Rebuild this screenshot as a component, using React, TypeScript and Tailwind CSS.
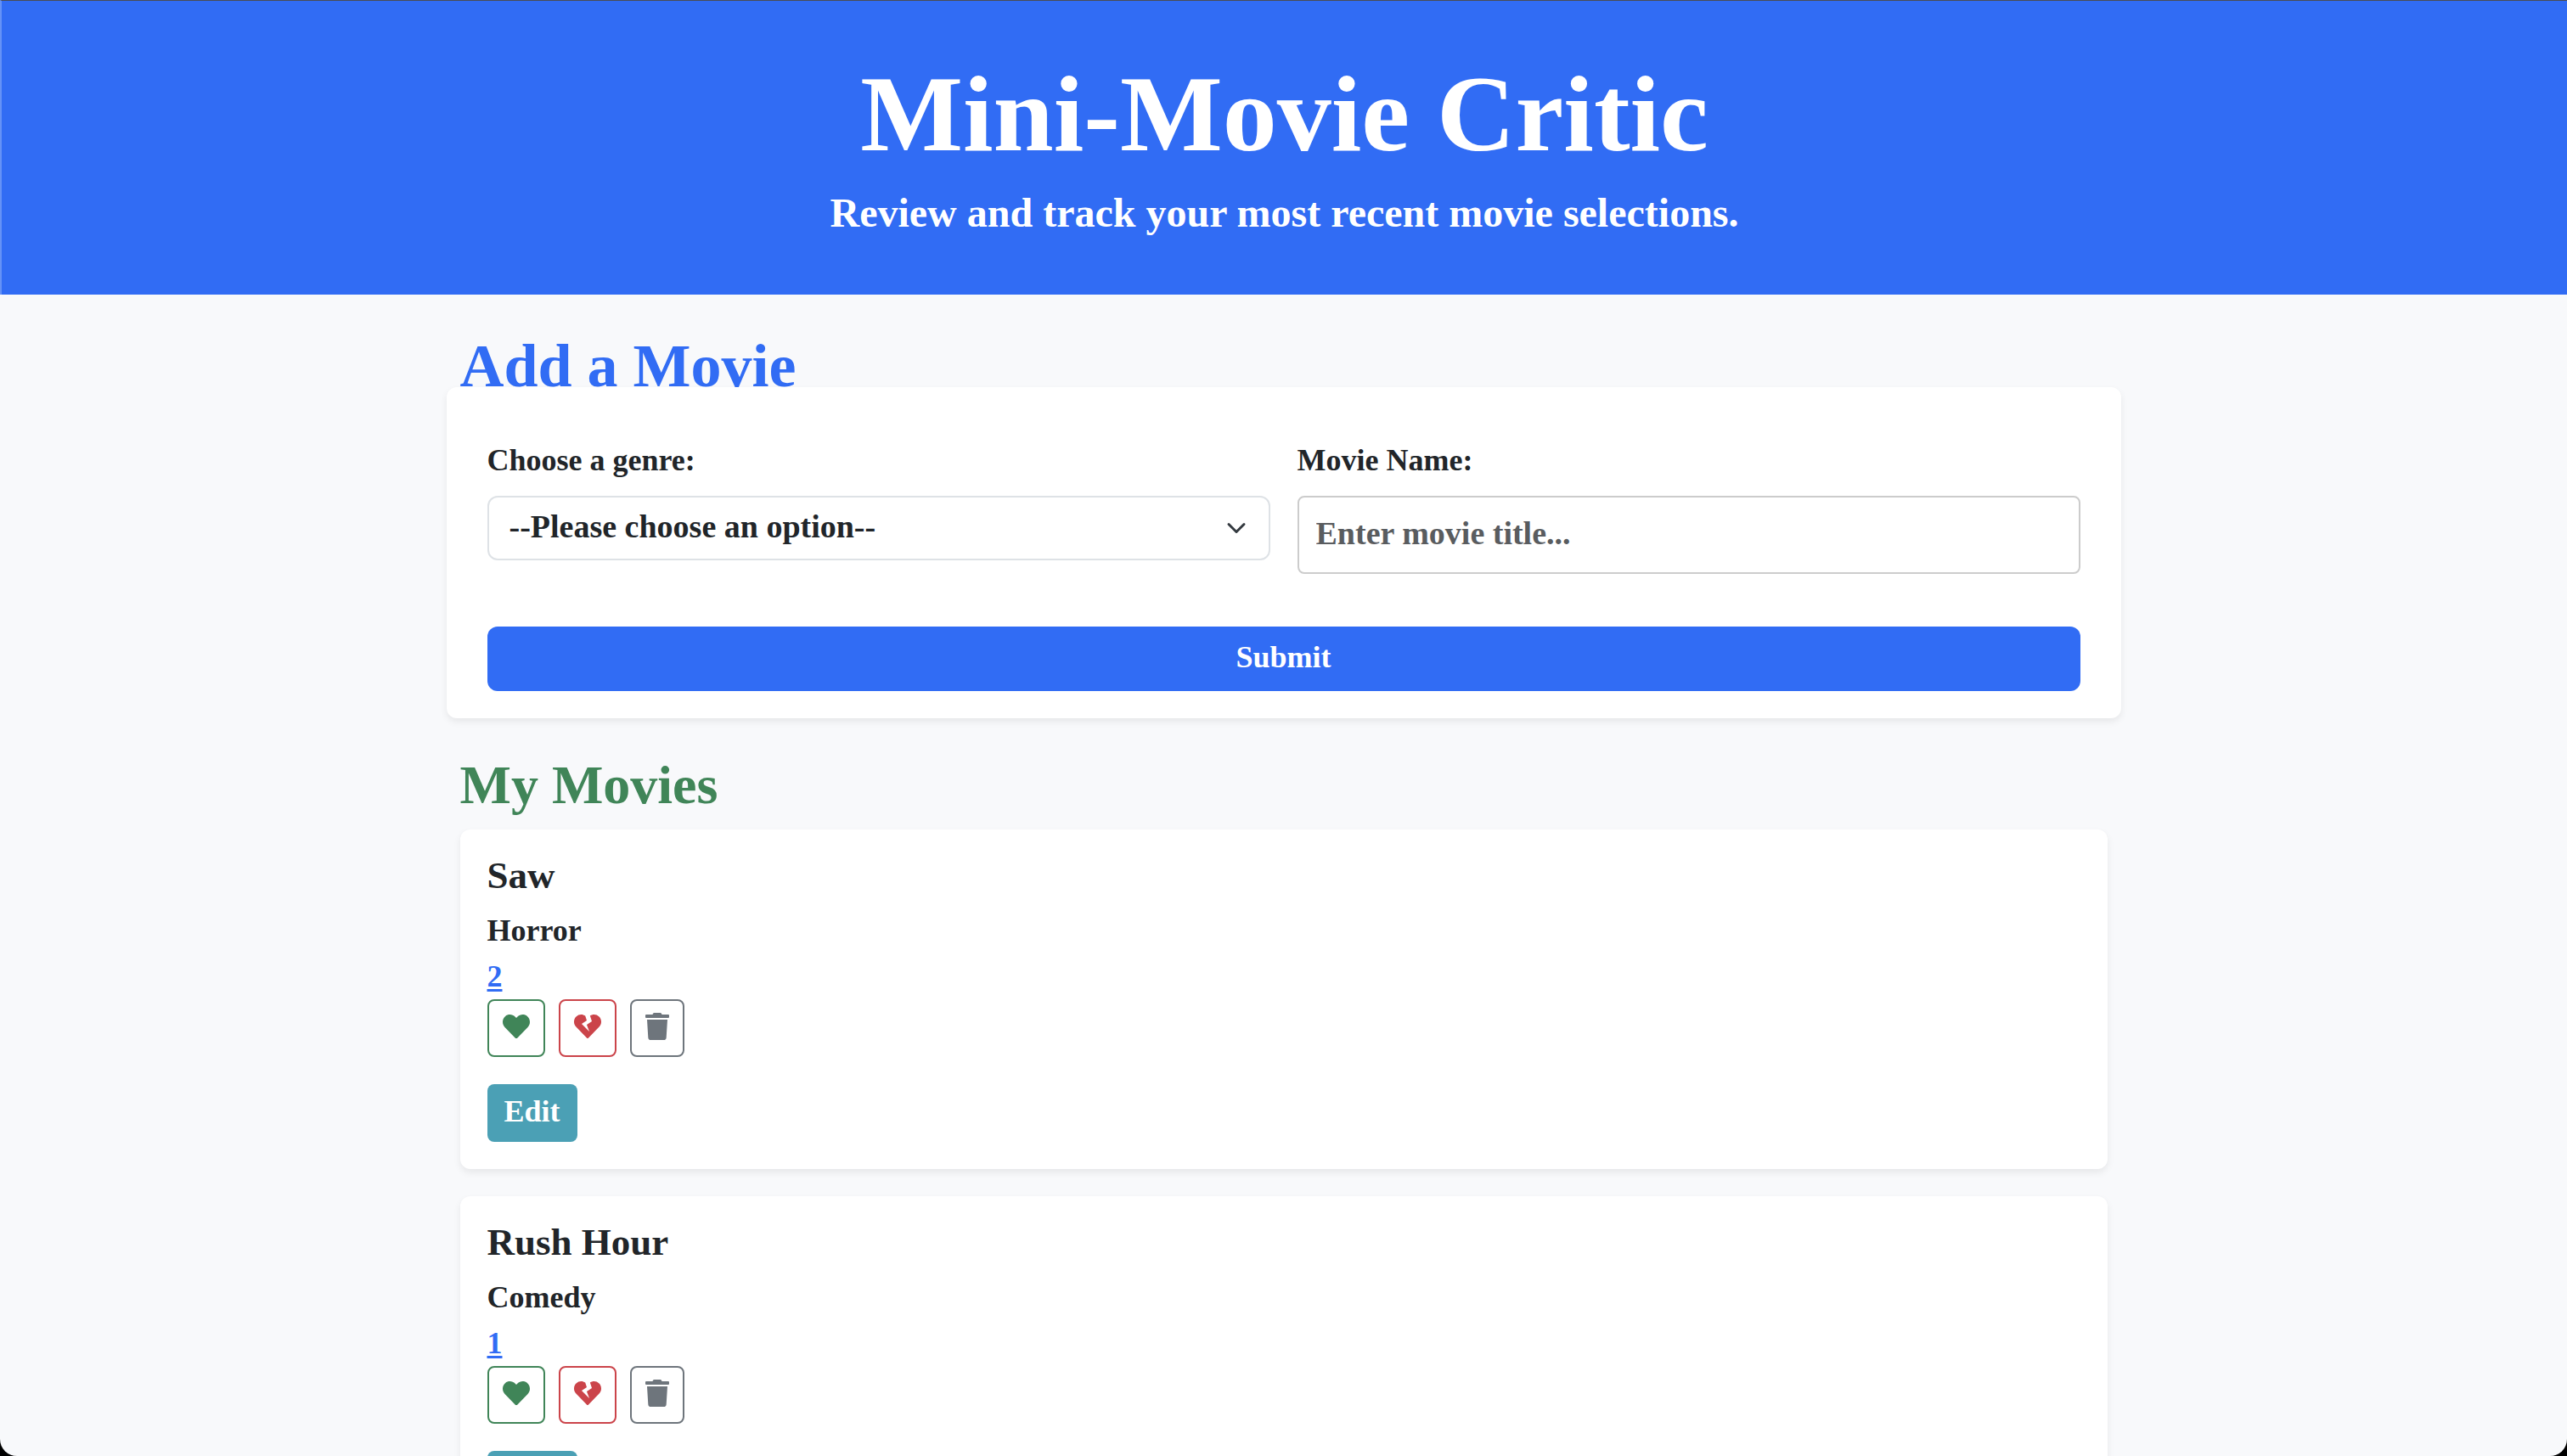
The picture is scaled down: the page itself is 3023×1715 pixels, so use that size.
import { useState } from 'react';
import { FaHeart, FaHeartBroken, FaTrash } from 'react-icons/fa';

type Movie = { id: number; title: string; genre: string; votes: number };

const initialMovies: Movie[] = [
  { id: 1, title: 'Saw', genre: 'Horror', votes: 2 },
  { id: 2, title: 'Rush Hour', genre: 'Comedy', votes: 1 },
];

const genres = ['Action', 'Comedy', 'Drama', 'Horror'];

function Header() {
  return (
    <header className="border-t border-l-2 border-t-[#4a4d55] border-l-[#6592f7] bg-[#316cf4] pt-14 pb-15 text-center text-white">
      <h1 className="text-[128px] leading-[154px]">Mini-Movie Critic</h1>
      <p className="mt-1 text-[48px] leading-[72px]">
        Review and track your most recent movie selections.
      </p>
    </header>
  );
}

function MovieForm({ onAdd }: { onAdd: (title: string, genre: string) => void }) {
  const [genre, setGenre] = useState('');
  const [title, setTitle] = useState('');

  return (
    <form
      className="relative rounded-xl bg-white px-12 pt-[58px] pb-8 shadow-[0_4px_8px_rgba(0,0,0,0.075)]"
      onSubmit={(event) => {
        event.preventDefault();
        if (title && genre) onAdd(title, genre);
      }}
    >
      <div className="grid grid-cols-2 items-start gap-8">
        <div>
          <label htmlFor="genre" className="mb-[14px] block text-[36px] leading-14">
            Choose a genre:
          </label>
          <div className="relative">
            <select
              id="genre"
              value={genre}
              onChange={(event) => setGenre(event.target.value)}
              className="block h-19 w-full appearance-none rounded-xl border-2 border-[#dee2e6] bg-white pr-18 pb-1 pl-6 text-[38px]"
            >
              <option value="">--Please choose an option--</option>
              {genres.map((name) => (
                <option key={name}>{name}</option>
              ))}
            </select>
            <svg
              viewBox="0 0 16 16"
              className="pointer-events-none absolute top-1/2 right-7 size-6 -translate-y-1/2"
              fill="none"
              stroke="#343a40"
              strokeWidth="2"
              strokeLinecap="round"
              strokeLinejoin="round"
              aria-hidden="true"
            >
              <path d="m2 5 6 6 6-6" />
            </svg>
          </div>
        </div>
        <div>
          <label htmlFor="title" className="mb-[14px] block text-[36px] leading-14">
            Movie Name:
          </label>
          <input
            id="title"
            type="text"
            value={title}
            onChange={(event) => setTitle(event.target.value)}
            placeholder="Enter movie title..."
            className="block h-23 w-full rounded-lg border-2 border-[#ccc] px-5 pb-1 text-[38px] placeholder:text-[#595c5f]"
          />
        </div>
      </div>
      <button
        type="submit"
        className="mt-[62px] block h-19 w-full rounded-xl bg-[#316cf4] pb-1 text-[36px] text-white"
      >
        Submit
      </button>
    </form>
  );
}

type CardProps = { movie: Movie; onVote: (change: number) => void; onDelete: () => void };

function MovieCard({ movie, onVote, onDelete }: CardProps) {
  return (
    <li className="rounded-xl bg-white p-8 shadow-[0_4px_8px_rgba(0,0,0,0.075)]">
      <h3 className="text-[45px] leading-11">{movie.title}</h3>
      <p className="mt-4 text-[36px] leading-[54px]">{movie.genre}</p>
      <a
        href="#votes"
        className="block w-fit text-[36px] leading-[54px] text-[#316cf4] underline decoration-[3px] underline-offset-[3px]"
      >
        {movie.votes}
      </a>
      <div className="flex gap-4">
        <button
          type="button"
          aria-label="Like"
          onClick={() => onVote(1)}
          className="flex h-17 items-center rounded-lg border-2 border-[#408558] px-4 pb-1 text-[32px] text-[#408558]"
        >
          <FaHeart />
        </button>
        <button
          type="button"
          aria-label="Dislike"
          onClick={() => onVote(-1)}
          className="flex h-17 items-center rounded-lg border-2 border-[#cb444a] px-4 pb-1 text-[32px] text-[#cb444a]"
        >
          <FaHeartBroken />
        </button>
        <button
          type="button"
          aria-label="Delete"
          onClick={onDelete}
          className="flex h-17 items-center rounded-lg border-2 border-[#6e757c] px-4 pb-1 text-[32px] text-[#6e757c]"
        >
          <FaTrash className="w-7" />
        </button>
      </div>
      <button
        type="button"
        className="mt-8 block h-17 rounded-lg bg-[#4ba0b5] px-5 pb-1 text-[36px] text-white"
      >
        Edit
      </button>
    </li>
  );
}

export default function App() {
  const [movies, setMovies] = useState(initialMovies);

  const vote = (id: number, change: number) =>
    setMovies(movies.map((m) => (m.id === id ? { ...m, votes: m.votes + change } : m)));

  return (
    <div className="h-screen bg-black">
      <div className="h-full overflow-y-auto rounded-b-[20px] bg-[#f8f9fb] font-['Liberation_Serif',serif] font-bold text-[#212529] [scrollbar-width:none]">
        <Header />
        <main className="mx-auto max-w-[1972px] pt-11 pb-16">
          <h2 className="-mb-[15px] px-4 text-[72px] leading-20 text-[#316cf4]">Add a Movie</h2>
          <MovieForm
            onAdd={(title, genre) =>
              setMovies([...movies, { id: Date.now(), title, genre, votes: 0 }])
            }
          />
          <section className="mt-[39px] px-4">
            <h2 className="mb-3 text-[64px] leading-20 text-[#408558]">My Movies</h2>
            <ul className="flex flex-col gap-8">
              {movies.map((movie) => (
                <MovieCard
                  key={movie.id}
                  movie={movie}
                  onVote={(change) => vote(movie.id, change)}
                  onDelete={() => setMovies(movies.filter((m) => m.id !== movie.id))}
                />
              ))}
            </ul>
          </section>
        </main>
      </div>
    </div>
  );
}
